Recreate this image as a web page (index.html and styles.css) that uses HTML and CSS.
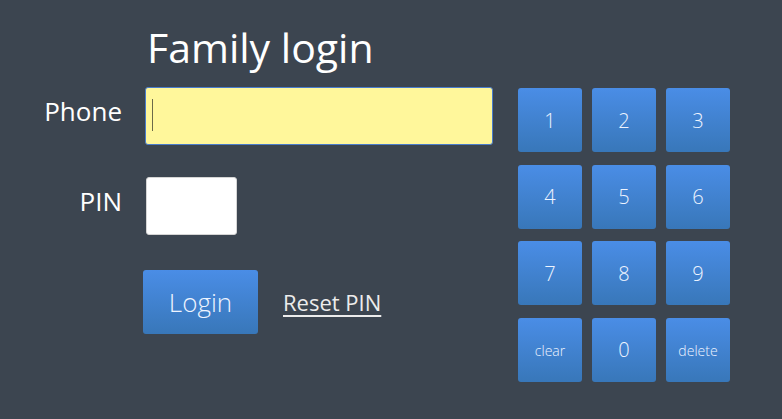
FILE: index.html
```html
<!DOCTYPE html>
<html>
<head>
<meta charset="utf-8">
<link rel="stylesheet" href="styles.css">
</head>
<body>
<div class="page">
  <form class="login">
    <div></div>
    <h1 class="title">Family login</h1>
    <label class="label label-phone" for="phone">Phone</label>
    <div class="field"><input id="phone" class="input phone" type="text"><span class="caret"></span></div>
    <label class="label label-pin" for="pin">PIN</label>
    <div class="field field-pin"><input id="pin" class="input pin" type="password"></div>
    <div></div>
    <div class="actions">
      <button type="button" class="btn login-btn">Login</button>
      <a class="reset" href="#">Reset PIN</a>
    </div>
  </form>
  <div class="keypad">
    <button type="button" class="btn key">1</button>
    <button type="button" class="btn key">2</button>
    <button type="button" class="btn key">3</button>
    <button type="button" class="btn key">4</button>
    <button type="button" class="btn key">5</button>
    <button type="button" class="btn key">6</button>
    <button type="button" class="btn key">7</button>
    <button type="button" class="btn key">8</button>
    <button type="button" class="btn key">9</button>
    <button type="button" class="btn key small">clear</button>
    <button type="button" class="btn key">0</button>
    <button type="button" class="btn key small">delete</button>
  </div>
</div>
</body>
</html>
```

FILE: styles.css
```css
html, body {
  margin: 0;
  padding: 0;
  background: #3c4550;
  height: 100%;
}
body {
  font-family: "Open Sans", "Noto Sans", sans-serif;
  color: #ffffff;
}
.page {
  display: flex;
  align-items: flex-start;
  padding-top: 22px;
}
.login {
  display: grid;
  grid-template-columns: 122px 348px;
  column-gap: 23px;
  align-items: start;
}
.title {
  margin: 0 0 15px 2px;
  font-size: 41px;
  font-weight: 400;
  line-height: 50px;
  color: #ffffff;
}
.label {
  text-align: right;
  font-size: 26px;
  line-height: 30px;
  color: #ffffff;
}
.label-phone {
  margin-top: 9px;
}
.label-pin {
  margin-top: 41px;
}
.field {
  position: relative;
  height: 58px;
}
.field-pin {
  margin-top: 32px;
}
.input {
  display: block;
  box-sizing: border-box;
  height: 58px;
  border-radius: 3px;
  border: 1px solid #d5d5d5;
  background: #ffffff;
  outline: none;
  padding: 0 8px;
  font-family: inherit;
  font-size: 20px;
}
.phone {
  width: 348px;
  background: #fff79b;
  border-color: #4a7ccc;
}
.caret {
  position: absolute;
  left: 7px;
  top: 12px;
  width: 1px;
  height: 32px;
  background: #6b6a4a;
}
.pin {
  width: 91px;
  margin-left: 1px;
}
.actions {
  display: flex;
  align-items: center;
  margin-top: 35px;
  margin-left: -2px;
  gap: 25px;
}
.btn {
  border: none;
  border-radius: 3px;
  background: linear-gradient(to bottom, #4a8de6, #3877b9);
  color: #eef4ff;
  font-family: "Open Sans", "Noto Sans", sans-serif;
  font-weight: 300;
  cursor: pointer;
  padding: 0;
}
.login-btn {
  width: 115px;
  height: 64px;
  font-size: 26px;
}
.reset {
  color: #ececec;
  font-size: 22px;
  text-decoration: underline;
  text-underline-offset: 4px;
}
.keypad {
  display: grid;
  grid-template-columns: repeat(3, 64px);
  grid-auto-rows: 64px;
  column-gap: 10px;
  row-gap: 12.5px;
  margin-left: 25px;
  margin-top: 66px;
}
.key {
  font-size: 20px;
}
.key.small {
  font-size: 14px;
  padding-top: 2px;
}
```
